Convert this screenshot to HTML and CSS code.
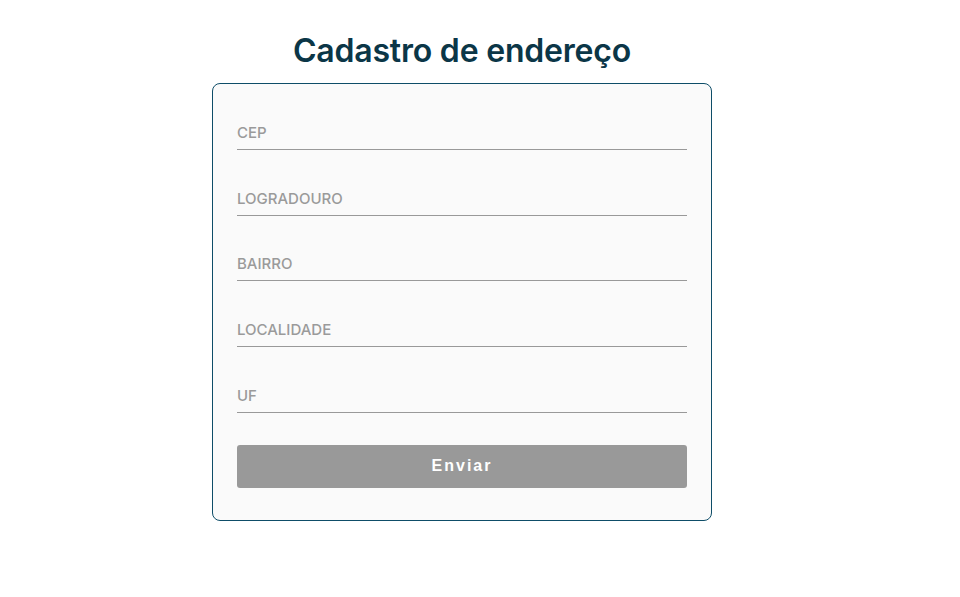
FILE: index.html
```html
<!DOCTYPE html>
<html lang="pt-BR">
<head>
<meta charset="utf-8">
<title>Cadastro de endereço</title>
<link rel="stylesheet" href="styles.css">
</head>
<body>
<main class="page">
  <h1 class="title">Cadastro de endereço</h1>
  <form class="card">
    <input class="field" type="text" placeholder="CEP">
    <input class="field" type="text" placeholder="LOGRADOURO">
    <input class="field" type="text" placeholder="BAIRRO">
    <input class="field" type="text" placeholder="LOCALIDADE">
    <input class="field" type="text" placeholder="UF">
    <button class="submit" type="button">Enviar</button>
  </form>
</main>
</body>
</html>
```
FILE: styles.css
```css
html, body {
  margin: 0;
  padding: 0;
  background: #ffffff;
}
.page {
  width: 924px;
  display: flex;
  flex-direction: column;
  align-items: center;
  font-family: Inter, "Noto Sans", sans-serif;
}
.title {
  margin: 31px 0 13px;
  font-size: 32px;
  font-weight: 600;
  letter-spacing: -0.2px;
  line-height: normal;
  color: #0b3647;
}
.card {
  box-sizing: border-box;
  width: 500px;
  padding: 32px 24px;
  border: 1px solid #0e4d68;
  border-radius: 8px;
  background: #fafafa;
  display: flex;
  flex-direction: column;
  gap: 32px;
}
.field {
  box-sizing: border-box;
  height: 33.75px;
  margin: 0;
  padding: 0;
  border: none;
  border-bottom: 1px solid #999999;
  background: transparent;
  font-family: Inter, "Noto Sans", sans-serif;
  font-size: 15px;
  font-weight: 500;
  color: #555;
  outline: none;
}
.field::placeholder {
  color: #9a9a9a;
  opacity: 1;
}
.submit {
  height: 43px;
  margin: 0;
  border: none;
  border-radius: 3px;
  background: #999999;
  color: #ffffff;
  font-family: "Liberation Sans", Arial, sans-serif;
  font-size: 16px;
  font-weight: 700;
  letter-spacing: 2px;
}
```
